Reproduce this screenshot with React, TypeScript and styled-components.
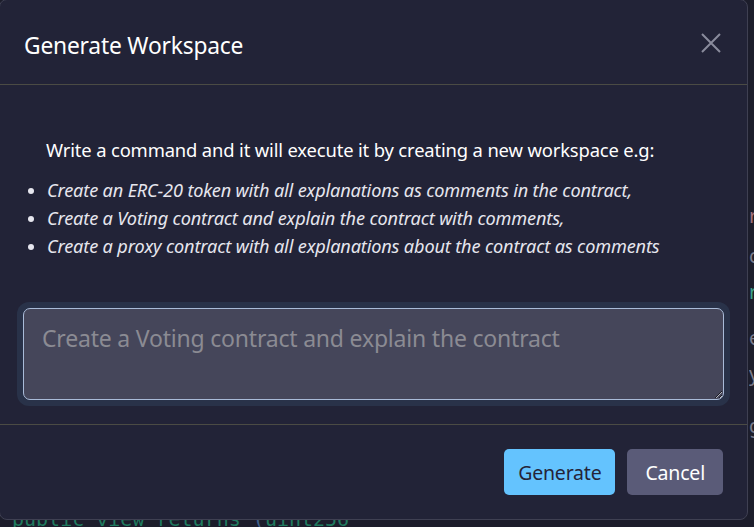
import React from 'react';
import styled, { createGlobalStyle } from 'styled-components';

const GlobalStyle = createGlobalStyle`
    html, body {
        margin: 0;
        padding: 0;
        background: #1c1d2b;
        overflow: hidden;
    }
    #root {
        width: 754px;
        height: 527px;
        position: relative;
        overflow: hidden;
    }
`;

const Editor = styled.div`
    position: relative;
    width: 754px;
    height: 527px;
    background: #1c1d2b;
    font-family: 'DejaVu Sans Mono', monospace;
    font-size: 16px;
`;

const SideText = styled.div`
    position: absolute;
    left: 749px;
    top: 0;
    width: 5px;
    height: 527px;
    overflow: hidden;
    font-family: 'Noto Sans', sans-serif;
    font-size: 20px;
    color: #7a7b8c;
`;

const SideLetter = styled.span<{ $top: number; $color?: string }>`
    position: absolute;
    left: 0;
    top: ${p => p.$top}px;
    line-height: 22px;
    color: ${p => p.$color || '#7a7b8c'};
`;

const BottomCode = styled.div`
    position: absolute;
    left: 12px;
    top: 507px;
    color: #1f7a5f;
    white-space: pre;
    font-size: 20px;
`;

const Paren = styled.span`
    color: #3d5f8a;
`;

const Backdrop = styled.div`
    position: absolute;
    left: -1px;
    top: -1px;
`;

const Modal = styled.div`
    width: 749px;
    height: 521px;
    box-sizing: border-box;
    background: #222337;
    border: 1px solid #3f4052;
    border-radius: 8px;
    display: flex;
    flex-direction: column;
    font-family: 'Noto Sans', sans-serif;
    color: #ffffff;
    overflow: hidden;
`;

const Header = styled.div`
    height: 85px;
    box-sizing: border-box;
    display: flex;
    align-items: center;
    justify-content: space-between;
    padding: 6px 24px 0 24px;
    border-bottom: 1px solid #4b4b44;
`;

const Title = styled.h5`
    margin: 0;
    font-size: 22.8px;
    font-weight: 400;
    letter-spacing: -0.2px;
`;

const CloseButton = styled.button`
    background: none;
    border: none;
    padding: 0;
    width: 24px;
    height: 24px;
    margin-top: -4px;
    cursor: pointer;
    display: flex;
    align-items: center;
    justify-content: center;
`;

const Body = styled.div`
    flex: 1;
    padding: 52px 24px 0 24px;
    display: flex;
    flex-direction: column;
`;

const Intro = styled.p`
    margin: 0 0 0 22px;
    font-size: 18.4px;
    line-height: 26px;
    letter-spacing: -0.15px;
`;

const Examples = styled.ul`
    margin: 13px 0 0 0;
    padding-left: 23px;
    list-style: disc;
`;

const Example = styled.li`
    font-style: italic;
    font-size: 18.15px;
    line-height: 28px;
    color: #e6e6ee;
    letter-spacing: -0.15px;
`;

const FieldRing = styled.div`
    margin: 42px -7px 0 -7px;
    padding: 6px;
    background: #293249;
    border-radius: 12px;
`;

const TextArea = styled.textarea`
    display: block;
    width: 100%;
    height: 92px;
    box-sizing: border-box;
    background: #45465a;
    border: 1px solid #a9bbd8;
    border-radius: 7px;
    padding: 14px 18px;
    font-family: 'Noto Sans', sans-serif;
    font-size: 23px;
    line-height: 30px;
    color: #ffffff;
    outline: none;
    resize: vertical;
    letter-spacing: -0.2px;
    &::placeholder {
        color: #8b8b93;
    }
`;

const Footer = styled.div`
    height: 95px;
    box-sizing: border-box;
    border-top: 1px solid #4b4b44;
    display: flex;
    justify-content: flex-end;
    align-items: flex-start;
    padding: 24px 24px 0 0;
    gap: 12px;
`;

const Button = styled.button<{ $variant: 'primary' | 'secondary' }>`
    height: 46px;
    padding: 0 ${p => (p.$variant === 'primary' ? '14px' : '18px')};
    border: none;
    border-radius: 5px;
    font-family: 'Noto Sans', sans-serif;
    font-size: 19.5px;
    letter-spacing: -0.2px;
    cursor: pointer;
    background: ${p => (p.$variant === 'primary' ? '#64c3fe' : '#5a5b78')};
    color: ${p => (p.$variant === 'primary' ? '#242438' : '#ffffff')};
`;

const examples = [
    'Create an ERC-20 token with all explanations as comments in the contract,',
    'Create a Voting contract and explain the contract with comments,',
    'Create a proxy contract with all explanations about the contract as comments',
];

const sideLetters: { top: number; ch: string; color?: string }[] = [
    { top: 205, ch: 'r', color: '#a0707a' },
    { top: 245, ch: 'c' },
    { top: 281, ch: 'r', color: '#3aa08a' },
    { top: 327, ch: 'e' },
    { top: 363, ch: 'y' },
    { top: 415, ch: 'g' },
];

const App: React.FC = () => {
    return (
        <Editor>
            <GlobalStyle />
            <SideText>
                {sideLetters.map(l => (
                    <SideLetter key={l.top} $top={l.top} $color={l.color}>
                        {l.ch}
                    </SideLetter>
                ))}
            </SideText>
            <BottomCode>
                public view returns <Paren>(</Paren>uint256
            </BottomCode>
            <Backdrop>
                <Modal>
                    <Header>
                        <Title>Generate Workspace</Title>
                        <CloseButton aria-label="Close">
                            <svg width="20" height="20" viewBox="0 0 20 20">
                                <path d="M1 1 L19 19 M19 1 L1 19" stroke="#8a8b9c" strokeWidth="2" />
                            </svg>
                        </CloseButton>
                    </Header>
                    <Body>
                        <Intro>Write a command and it will execute it by creating a new workspace e.g:</Intro>
                        <Examples>
                            {examples.map(text => (
                                <Example key={text}>{text}</Example>
                            ))}
                        </Examples>
                        <FieldRing>
                            <TextArea placeholder="Create a Voting contract and explain the contract" />
                        </FieldRing>
                    </Body>
                    <Footer>
                        <Button $variant="primary">Generate</Button>
                        <Button $variant="secondary">Cancel</Button>
                    </Footer>
                </Modal>
            </Backdrop>
        </Editor>
    );
};

export default App;
